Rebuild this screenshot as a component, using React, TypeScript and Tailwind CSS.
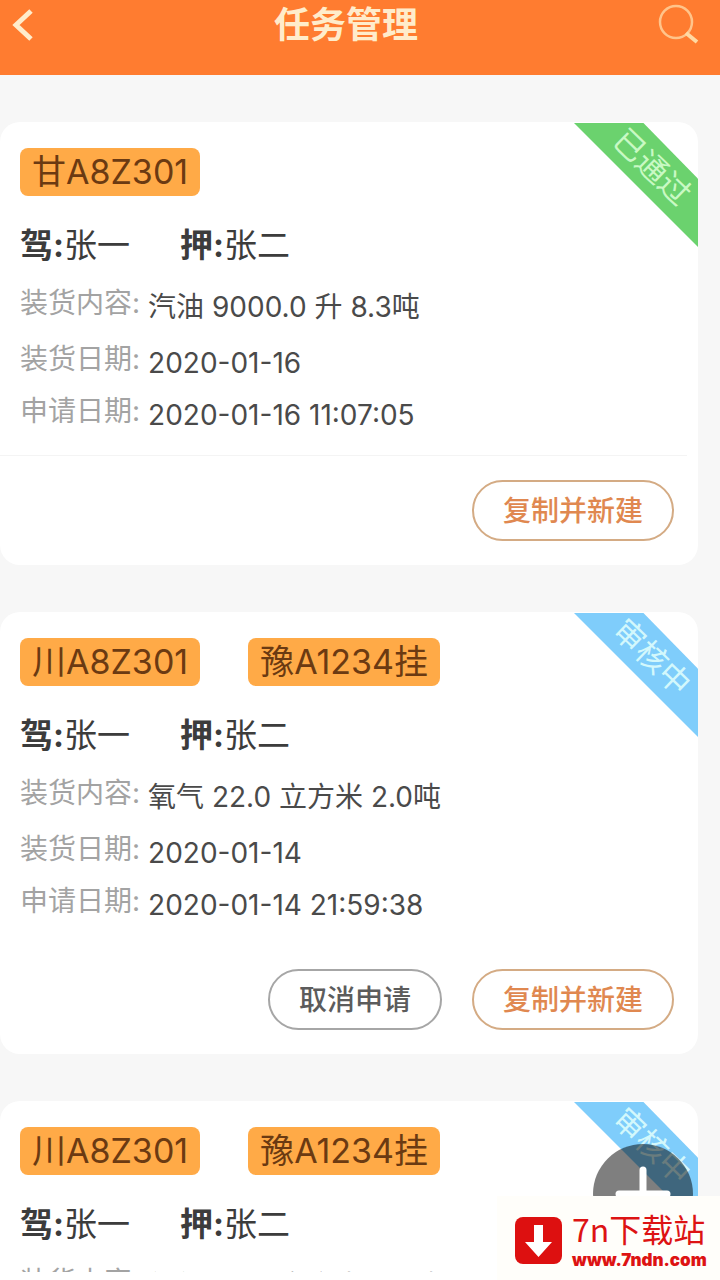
import { ReactNode } from 'react';

type Status = 'approved' | 'reviewing';

interface Task {
  id: number;
  plates: string[];
  driver: string;
  escort: string;
  cargo: string;
  loadDate: string;
  applyDate: string;
  status: Status;
}

const tasks: Task[] = [
  {
    id: 1,
    plates: ['甘A8Z301'],
    driver: '张一',
    escort: '张二',
    cargo: '汽油 9000.0 升 8.3吨',
    loadDate: '2020-01-16',
    applyDate: '2020-01-16 11:07:05',
    status: 'approved',
  },
  {
    id: 2,
    plates: ['川A8Z301', '豫A1234挂'],
    driver: '张一',
    escort: '张二',
    cargo: '氧气 22.0 立方米 2.0吨',
    loadDate: '2020-01-14',
    applyDate: '2020-01-14 21:59:38',
    status: 'reviewing',
  },
  {
    id: 3,
    plates: ['川A8Z301', '豫A1234挂'],
    driver: '张一',
    escort: '张二',
    cargo: '氧气 22.0 立方米 2.0吨',
    loadDate: '2020-01-14',
    applyDate: '2020-01-14 21:59:38',
    status: 'reviewing',
  },
];

const ribbons: Record<Status, { label: string; className: string }> = {
  approved: { label: '已通过', className: 'bg-[#6bd26e] text-[#c9f9c4]' },
  reviewing: { label: '审核中', className: 'bg-[#7fcdfb] text-[#d3f8fc]' },
};

function Header() {
  return (
    <header className="flex h-[75px] shrink-0 items-start justify-between bg-[#ff7c30] pr-5 pl-3 text-[#ffeccb]">
      <button type="button" aria-label="返回" className="pt-2">
        <svg viewBox="0 0 22 34" className="h-[34px] w-[22px]" fill="none" stroke="currentColor" strokeWidth="5">
          <path d="M19 3 4 17l15 14" />
        </svg>
      </button>
      <h1 className="text-4xl leading-[50px] font-bold">任务管理</h1>
      <button type="button" aria-label="搜索" className="pt-1 text-[#ffc48b]">
        <svg viewBox="0 0 42 42" className="size-[42px]" fill="none" stroke="currentColor">
          <circle cx="18" cy="18" r="16" strokeWidth="2.500" />
          <path d="m28 29 11 9" strokeWidth="4" stroke="#ffd9a3" />
        </svg>
      </button>
    </header>
  );
}

function Ribbon({ status }: { status: Status }) {
  const { label, className } = ribbons[status];
  return (
    <div
      className={`absolute top-px right-0 size-[124px] [clip-path:polygon(0_0,56%_0,100%_45%,100%_100%)] ${className}`}
    >
      <span className="absolute top-6 left-[30px] w-24 rotate-[44deg] text-center text-[31px] leading-10">
        {label}
      </span>
    </div>
  );
}

function Row({ label, children }: { label: string; children: ReactNode }) {
  return (
    <div className="flex items-start gap-2 text-[28px]">
      <dt className="leading-10 text-[#a3a3a3]">{label}:</dt>
      <dd className="leading-[48px] text-[#4a4a4a]">{children}</dd>
    </div>
  );
}

function TaskCard({ task }: { task: Task }) {
  const approved = task.status === 'approved';
  return (
    <article className="relative shrink-0 rounded-[20px] bg-white pt-[26px] pb-6">
      <Ribbon status={task.status} />
      <div className="px-5">
        <div className="flex gap-12">
          {task.plates.map((plate) => (
            <span
              key={plate}
              className="h-12 rounded-lg bg-[#ffaa47] px-3 text-[34px] leading-[48px] text-[#6b3a12]"
            >
              {plate}
            </span>
          ))}
        </div>
        <p className="mt-6 flex gap-[50px] text-[33px] leading-[51px] text-[#3c3c3c]">
          <span>
            <b>驾:</b>
            {task.driver}
          </span>
          <span>
            <b>押:</b>
            {task.escort}
          </span>
        </p>
        <dl className="mt-3">
          <Row label="装货内容">{task.cargo}</Row>
          <div className="mt-2">
            <Row label="装货日期">{task.loadDate}</Row>
          </div>
          <div className="mt-1">
            <Row label="申请日期">{task.applyDate}</Row>
          </div>
        </dl>
      </div>
      <div className={`mr-[11px] border-[#f4f4f4] pt-4 ${approved ? 'border-b' : ''}`} />
      <div className="mt-6 flex justify-end gap-[30px] pr-6 text-[28px] font-medium">
        {!approved && (
          <button type="button" className="h-[61px] rounded-full border-2 border-[#a6a6a6] px-[29px] text-[#5c5c5c]">
            取消申请
          </button>
        )}
        <button type="button" className="h-[61px] rounded-full border-2 border-[#d4ab84] px-[29px] text-[#e08850]">
          复制并新建
        </button>
      </div>
    </article>
  );
}

function SiteBadge() {
  return (
    <a href="#" className="absolute right-0 bottom-0 flex h-[84px] w-[223px] items-center gap-2.5 bg-[#fffefa] pt-1 pl-[18px] text-[#dd1313]">
      <svg viewBox="0 0 47 47" className="size-[47px] shrink-0">
        <rect width="47" height="47" rx="8" fill="#dd1010" />
        <path d="M19 8h9v17h9L23.500 40 10 25h9Z" fill="#fff" />
      </svg>
      <span>
        <span className="block font-['Noto_Sans_CJK_SC',sans-serif] text-[32px] leading-10">7n下载站</span>
        <span className="block text-[17px] leading-6 font-black">www.7ndn.com</span>
      </span>
    </a>
  );
}

export default function App() {
  return (
    <div className="relative flex h-screen flex-col overflow-hidden bg-white pb-2 font-[Inter,'Noto_Sans_CJK_SC',sans-serif]">
      <Header />
      <main className="flex min-h-0 flex-1 flex-col gap-[47px] overflow-hidden bg-[#f7f7f7] pt-[47px] pr-[22px]">
        {tasks.map((task) => (
          <TaskCard key={task.id} task={task} />
        ))}
      </main>
      <button
        type="button"
        aria-label="新建任务"
        className="absolute right-[27px] bottom-9 flex size-[100px] items-center justify-center rounded-full bg-black/50"
      >
        <svg viewBox="0 0 56 56" className="size-14" stroke="#fff" strokeWidth="7" strokeLinecap="round">
          <path d="M28 4v48M4 28h48" />
        </svg>
      </button>
      <SiteBadge />
    </div>
  );
}
